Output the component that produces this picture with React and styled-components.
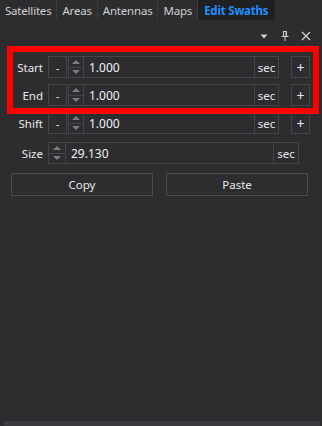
import React from "react";
import styled, { createGlobalStyle } from "styled-components";

const GlobalStyle = createGlobalStyle`
  html, body { margin: 0; padding: 0; background: #2d2d30; }
  body { font-family: "Noto Sans", "Open Sans", sans-serif; }
`;

const Root = styled.div`
  position: relative;
  width: 322px;
  height: 426px;
  display: flex;
  flex-direction: column;
  background: #2d2d30;
  color: #e6e6e6;
  font-size: 11px;
  overflow: hidden;
`;

const TabBar = styled.div`
  display: flex;
  height: 20px;
`;

const Tab = styled.div`
  display: flex;
  align-items: center;
  padding: 0 ${(p) => (p.$active ? 6 : 5)}px;
  height: 20px;
  border-right: 1px solid ${(p) => (p.$active ? "transparent" : "#3b3c40")};
  background: ${(p) => (p.$active ? "#1f2022" : "transparent")};
  color: ${(p) => (p.$active ? "#1e8fff" : "#d0d0d0")};
  font-weight: ${(p) => (p.$active ? 700 : 400)};
  font-size: 11.5px;
  letter-spacing: -0.2px;
  white-space: nowrap;
`;

const ToolRow = styled.div`
  display: flex;
  justify-content: flex-end;
  align-items: center;
  height: 20px;
  gap: 9px;
  padding-right: 10px;
  padding-top: 6px;
`;

const ToolIcon = styled.svg`
  width: 12px;
  height: 12px;
  display: block;
`;

const Form = styled.div`
  display: flex;
  flex-direction: column;
  gap: 6px;
  margin-top: 10px;
`;

const Row = styled.div`
  display: flex;
  align-items: stretch;
  height: 22px;
  margin-top: ${(p) => p.$offset || 0}px;
`;

const Label = styled.div`
  width: 43px;
  margin-right: 5px;
  display: flex;
  align-items: center;
  justify-content: flex-end;
  color: #e8e8e8;
  font-size: 11.5px;
`;

const Box = styled.div`
  box-sizing: border-box;
  border: 1px solid #45464a;
  display: flex;
  align-items: center;
  justify-content: center;
  color: #e8e8e8;
  font-size: 11.5px;
  flex: none;
`;

const MinusBox = styled(Box)`
  width: 19px;
  margin-right: 1px;
`;

const PlusBox = styled(Box)`
  width: 19px;
  margin-left: 12px;
  font-size: 14px;
`;

const Spinner = styled.div`
  width: ${(p) => p.$w}px;
  display: flex;
  flex-direction: column;
  flex: none;
`;

const SpinHalf = styled.div`
  flex: 1;
  box-sizing: border-box;
  border: 1px solid #45464a;
  border-top-width: ${(p) => (p.$down ? 0 : 1)}px;
  display: flex;
  align-items: center;
  justify-content: center;
`;

const Arrow = styled.div`
  width: 0;
  height: 0;
  border-left: 4px solid transparent;
  border-right: 4px solid transparent;
  ${(p) =>
    p.$down
      ? "border-top: 4px solid #7d7e82;"
      : "border-bottom: 4px solid #7d7e82;"}
`;

const ValueBox = styled(Box)`
  width: ${(p) => p.$w}px;
  justify-content: flex-start;
  padding-left: 5px;
  border-left-width: 0;
  color: #f0f0f0;
  font-size: 12px;
`;

const UnitBox = styled(Box)`
  width: ${(p) => p.$w}px;
  border-left-width: 1px;
  margin-left: -1px;
  color: #e8e8e8;
`;

const ButtonRow = styled.div`
  display: flex;
  gap: 13px;
  padding-left: 11px;
  margin-top: 9px;
`;

const Button = styled.div`
  box-sizing: border-box;
  width: 142px;
  height: 23px;
  border: 1px solid #4a4b4f;
  display: flex;
  align-items: center;
  justify-content: center;
  color: #e8e8e8;
  font-size: 11.5px;
`;

const Footer = styled.div`
  margin: auto 2px 0 4px;
  height: 5px;
  background: #393b3f;
`;

const Highlight = styled.div`
  position: absolute;
  left: 7px;
  top: 46px;
  width: 312px;
  height: 68px;
  box-sizing: border-box;
  border: 6px solid #ff0000;
  pointer-events: none;
`;

function Spin({ w }) {
  return (
    <Spinner $w={w}>
      <SpinHalf>
        <Arrow />
      </SpinHalf>
      <SpinHalf $down>
        <Arrow $down />
      </SpinHalf>
    </Spinner>
  );
}

function TimeRow({ label, value }) {
  return (
    <Row>
      <Label>{label}</Label>
      <MinusBox>-</MinusBox>
      <Spin w={16} />
      <ValueBox $w={171}>{value}</ValueBox>
      <UnitBox $w={25}>sec</UnitBox>
      <PlusBox>+</PlusBox>
    </Row>
  );
}

export default function App() {
  return (
    <Root>
      <GlobalStyle />
      <TabBar>
        <Tab>Satellites</Tab>
        <Tab>Areas</Tab>
        <Tab>Antennas</Tab>
        <Tab>Maps</Tab>
        <Tab $active>Edit Swaths</Tab>
      </TabBar>
      <ToolRow>
        <ToolIcon viewBox="0 0 12 12">
          <path d="M2.5 4.5h7L6 8.5z" fill="#d0d0d0" />
        </ToolIcon>
        <ToolIcon viewBox="0 0 12 12">
          <path
            d="M4 1.5h4M4.5 1.5v5M7.5 1.5v5M2.5 6.5h7M6 6.5v4.5"
            stroke="#d0d0d0"
            strokeWidth="1"
            fill="none"
          />
          <rect x="6.5" y="1.5" width="1" height="5" fill="#d0d0d0" />
        </ToolIcon>
        <ToolIcon viewBox="0 0 12 12">
          <path d="M2 2l8 8M10 2l-8 8" stroke="#d0d0d0" strokeWidth="1.3" />
        </ToolIcon>
      </ToolRow>
      <Form>
        <TimeRow label="Start" value="1.000" />
        <TimeRow label="End" value="1.000" />
        <TimeRow label="Shift" value="1.000" />
        <Row $offset={2}>
          <Label>Size</Label>
          <Spin w={18} />
          <ValueBox $w={208}>29.130</ValueBox>
          <UnitBox $w={26}>sec</UnitBox>
        </Row>
      </Form>
      <ButtonRow>
        <Button>Copy</Button>
        <Button>Paste</Button>
      </ButtonRow>
      <Footer />
      <Highlight />
    </Root>
  );
}
